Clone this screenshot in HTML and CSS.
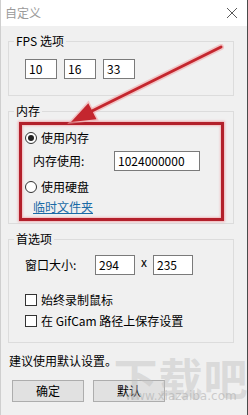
FILE: index.html
```html
<!DOCTYPE html>
<html lang="zh">
<head>
<meta charset="utf-8">
<title>自定义</title>
<link rel="stylesheet" href="styles.css">
</head>
<body>
<div class="win">
  <div class="titlebar">
    <span class="title">自定义</span>
    <svg class="close" width="12" height="12" viewBox="0 0 12 12"><path d="M1 1L11 11M11 1L1 11" stroke="#5a5a5a" stroke-width="1" fill="none"/></svg>
  </div>
  <div class="content">
    <fieldset class="grp g-fps">
      <legend>FPS 选项</legend>
      <div class="fps-row">
        <span class="field f-fps">10</span>
        <span class="field f-fps">16</span>
        <span class="field f-fps">33</span>
      </div>
    </fieldset>

    <fieldset class="grp g-mem">
      <legend>内存</legend>
      <div class="hl">
        <div class="opt r1"><span class="radio checked"></span><span>使用内存</span></div>
        <div class="mem-row"><span class="mem-label">内存使用:</span><span class="field f-mem">1024000000</span></div>
        <div class="opt r2"><span class="radio"></span><span>使用硬盘</span></div>
        <a class="link" href="#">临时文件夹</a>
      </div>
    </fieldset>

    <fieldset class="grp g-pref">
      <legend>首选项</legend>
      <div class="pref-body">
        <div class="size-row">
          <span class="size-label">窗口大小:</span>
          <span class="field f-size">294</span>
          <span class="times">x</span>
          <span class="field f-size">235</span>
        </div>
        <div class="opt c1"><span class="check"></span><span>始终录制鼠标</span></div>
        <div class="opt c2"><span class="check"></span><span>在 GifCam 路径上保存设置</span></div>
      </div>
    </fieldset>

    <p class="hint">建议使用默认设置。</p>
    <div class="btns">
      <button class="btn">确定</button>
      <button class="btn">默认</button>
    </div>
  </div>

  <svg class="arrow" width="248" height="415" viewBox="0 0 248 415">
    <line x1="221" y1="47" x2="92" y2="111" stroke="#f2a9ab" stroke-width="6" stroke-linecap="round" opacity="0.6"/>
    <polygon points="71,122 88.3,103.2 96.5,119.2" fill="#f2a9ab" stroke="#f2a9ab" stroke-width="3" opacity="0.6"/>
    <line x1="221" y1="47" x2="92" y2="111" stroke="#c4262e" stroke-width="3" stroke-linecap="round"/>
    <polygon points="71,122 88.3,103.2 96.5,119.2" fill="#c4262e"/>
  </svg>

  <div class="wm"><span class="wm-big">下载吧</span><span class="wm-url">www.xiazaiba.com</span></div>
</div>
</body>
</html>
```

FILE: styles.css
```css
* { box-sizing: border-box; }
html, body { margin: 0; padding: 0; }
body {
  width: 248px;
  height: 415px;
  overflow: hidden;
  font-family: "Noto Sans CJK SC", "Noto Sans", sans-serif;
  font-size: 12px;
  line-height: 14px;
  color: #000;
}
.win {
  position: relative;
  width: 248px;
  height: 415px;
  background: #f0f0f0;
  border-left: 1px solid #cfcfcf;
  border-right: 1px solid #4a4a4a;
  display: flex;
  flex-direction: column;
}
.titlebar {
  height: 26px;
  background: #fff;
  display: flex;
  align-items: center;
  justify-content: space-between;
  padding: 0 9px 0 4px;
}
.title { color: #9a9a9a; font-size: 12px; }

.content {
  padding: 8px 13px 0 7px;
  display: flex;
  flex-direction: column;
}
.grp {
  margin: 0;
  padding: 0;
  border: 1px solid #dcdcdc;
  min-width: 0;
}
.grp legend {
  margin-left: 5px;
  padding: 0 2px;
  line-height: 14px;
}
.field {
  display: inline-block;
  height: 20px;
  background: #fff;
  border: 1px solid #7a7a7a;
  padding: 0 3px;
  line-height: 18px;
  font-size: 12px;
}

.fps-row {
  display: flex;
  gap: 7px;
  padding: 11px 0 16px 16px;
}
.f-fps { width: 32px; }

.g-mem { margin-top: 8px; }
.hl {
  margin: 4px 9px 2px 10px;
  border: 3px solid #b3202b;
  box-shadow: 0 0 2px 1px rgba(240, 150, 155, 0.7), inset 0 0 2px 1px rgba(240, 150, 155, 0.6);
  padding: 6px 0 4px 3px;
  display: flex;
  flex-direction: column;
  align-items: flex-start;
}
.opt {
  display: flex;
  align-items: center;
  gap: 4px;
  height: 14px;
}
.radio {
  width: 12px;
  height: 12px;
  border: 1px solid #333;
  border-radius: 50%;
  background: #fff;
  position: relative;
  flex: none;
}
.radio.checked::after {
  content: "";
  position: absolute;
  left: 2px; top: 2px;
  width: 6px; height: 6px;
  border-radius: 50%;
  background: #222;
}
.mem-row {
  display: flex;
  align-items: center;
  margin-top: 6px;
  padding-left: 8px;
}
.mem-label { width: 81px; }
.f-mem { width: 86px; }
.r2 { margin-top: 9px; }
.link {
  margin-top: 6px;
  margin-left: 8px;
  color: #1a6aa6;
  text-decoration: underline;
  line-height: 14px;
}

.g-pref { margin-top: 8px; }
.pref-body {
  display: flex;
  flex-direction: column;
  align-items: flex-start;
  padding: 0 0 14px 16px;
}
.size-row {
  display: flex;
  align-items: center;
  margin-top: 9px;
}
.size-label { width: 70px; }
.f-size { width: 40px; }
.times { width: 18px; text-align: center; margin-top: -6px; }
.check {
  width: 12px;
  height: 12px;
  border: 1px solid #333;
  background: #fff;
  flex: none;
}
.c1 { margin-top: 18px; }
.c2 { margin-top: 7px; }

.hint { margin: 11px 0 0 1px; }
.btns {
  display: flex;
  gap: 9px;
  margin: 12px 0 0 4px;
}
.btn {
  width: 72px;
  height: 22px;
  padding: 0;
  background: #e1e1e1;
  border: 1px solid #adadad;
  font-family: inherit;
  font-size: 12px;
  line-height: 20px;
  color: #000;
}

.arrow {
  position: absolute;
  left: -1px;
  top: 0;
  pointer-events: none;
}
.wm {
  position: absolute;
  left: 112px;
  top: 352px;
  width: 136px;
  pointer-events: none;
  display: flex;
  flex-direction: column;
  align-items: center;
}
.wm-big {
  font-size: 44px;
  line-height: 50px;
  font-weight: bold;
  color: rgba(190, 190, 190, 0.45);
  letter-spacing: 1px;
}
.wm-url {
  margin-top: -12px;
  font-size: 12px;
  line-height: 12px;
  font-family: "DejaVu Sans", sans-serif;
  color: rgba(170, 170, 170, 0.55);
}
```
